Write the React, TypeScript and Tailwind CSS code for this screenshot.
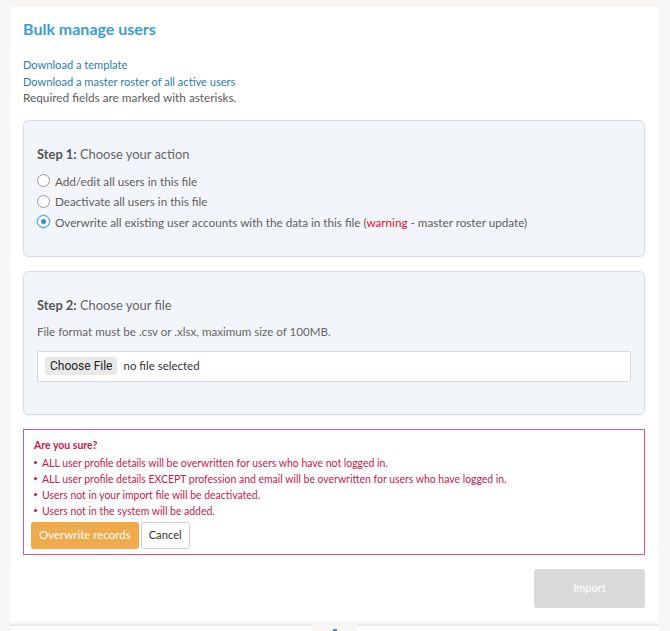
import React from 'react';

const Radio: React.FC<{ checked?: boolean }> = ({ checked }) => (
  <span
    className={`flex h-[13px] w-[13px] shrink-0 items-center justify-center rounded-full border bg-white ${
      checked ? 'border-[#3b9ad6] shadow-[0_0_0_1px_#cfe6f5]' : 'border-[#9a9a9a]'
    }`}
  >
    {checked && <span className="h-[5px] w-[5px] rounded-full bg-[#2f8fd0]" />}
  </span>
);

const options = [
  { label: 'Add/edit all users in this file' },
  { label: 'Deactivate all users in this file' },
];

const warnings = [
  'ALL user profile details will be overwritten for users who have not logged in.',
  'ALL user profile details EXCEPT profession and email will be overwritten for users who have logged in.',
  'Users not in your import file will be deactivated.',
  'Users not in the system will be added.',
];

export default function App() {
  return (
    <div
      className="flex h-[631px] flex-col overflow-hidden bg-[#f7f6f4] pl-[10px] pr-[12px] pt-[7px]"
      style={{ fontFamily: 'Lato, "Open Sans", sans-serif' }}
    >
      <div className="flex h-[615px] shrink-0 flex-col bg-white px-[13px] pt-[11px]">
        <h1 className="text-[16px] font-bold leading-[22px] text-[#3a9ed2]">Bulk manage users</h1>

        <div className="mt-[17px] flex flex-col leading-[16.5px]">
          <a className="text-[11.1px] text-[#2a7db8]">Download a template</a>
          <a className="text-[11.1px] text-[#2a7db8]">Download a master roster of all active users</a>
          <p className="text-[11.8px] text-[#5c5c5c]">Required fields are marked with asterisks.</p>
        </div>

        <section className="mt-[13px] h-[137px] rounded-[6px] border border-[#d9dee4] bg-[#f2f5f9] px-[13px] pt-[24px] shadow-[0_1px_3px_rgba(0,0,0,0.06)]">
          <h2 className="text-[12.9px] leading-[18px] text-[#666]">
            <span className="font-bold text-[#555]">Step 1:</span> Choose your action
          </h2>
          <div className="mt-[8px] flex flex-col text-[11.7px] leading-[20.5px] text-[#5f5f5f]">
            {options.map((o) => (
              <label key={o.label} className="flex items-center gap-[5px]">
                <Radio />
                <span>{o.label}</span>
              </label>
            ))}
            <label className="flex items-center gap-[5px]">
              <Radio checked />
              <span>
                Overwrite all existing user accounts with the data in this file (
                <span className="text-[#e8102c]">warning</span> - master roster update)
              </span>
            </label>
          </div>
        </section>

        <section className="mt-[14px] h-[144px] rounded-[6px] border border-[#d9dee4] bg-[#f2f5f9] px-[13px] pt-[24px] shadow-[0_1px_3px_rgba(0,0,0,0.06)]">
          <h2 className="text-[12.9px] leading-[18px] text-[#666]">
            <span className="font-bold text-[#555]">Step 2:</span> Choose your file
          </h2>
          <p className="mt-[9px] text-[11.6px] leading-[17px] text-[#666]">
            File format must be .csv or .xlsx, maximum size of 100MB.
          </p>
          <div className="mt-[11px] flex h-[31px] items-center rounded-[2px] border border-[#d6d9dd] bg-white px-[7px]">
            <span
              className="rounded-[3px] bg-[#e9e9e9] px-[5px] text-[12px] leading-[18px] text-[#222]"
              style={{ fontFamily: 'Roboto, "Liberation Sans", sans-serif' }}
            >
              Choose File
            </span>
            <span className="ml-[6px] text-[11.5px] text-[#333]">no file selected</span>
          </div>
        </section>

        <section className="mt-[14px] h-[126px] border-[1.5px] border-[#df5a7c] px-[10px] pt-[7px]">
          <p className="text-[10.5px] font-bold leading-[16px] text-[#c8174a]">Are you sure?</p>
          <ul className="mt-[2px] flex flex-col text-[10.45px] leading-[16px] text-[#c8174a]">
            {warnings.map((w) => (
              <li key={w} className="flex items-center">
                <span className="mr-[5px] h-[3px] w-[3px] rounded-full bg-[#c8174a]" />
                {w}
              </li>
            ))}
          </ul>
          <div className="mt-[3px] flex gap-[2px]">
            <button className="-ml-[3px] h-[27px] rounded-[3px] bg-[#efaa4c] px-[8px] text-[11.5px] text-white">
              Overwrite records
            </button>
            <button className="h-[27px] rounded-[3px] border border-[#cfcfcf] bg-white px-[7px] text-[11.2px] text-[#333]">
              Cancel
            </button>
          </div>
        </section>

        <div className="mt-[14px] flex justify-end">
          <button className="h-[39px] w-[111px] rounded-[3px] bg-[#dadada] text-[11px] text-white">Import</button>
        </div>
      </div>

      <div className="mt-[2px] flex h-[20px] shrink-0 items-start">
        <div className="h-full w-[302px] border-t-[2px] border-[#ebebeb] bg-white" />
        <div className="flex w-[46px] justify-center pt-[5px]">
          <span className="h-[3px] w-[4px] bg-[#2a93c9]" />
        </div>
        <div className="h-full flex-1 border-t-[2px] border-[#ebebeb] bg-white" />
      </div>
    </div>
  );
}
